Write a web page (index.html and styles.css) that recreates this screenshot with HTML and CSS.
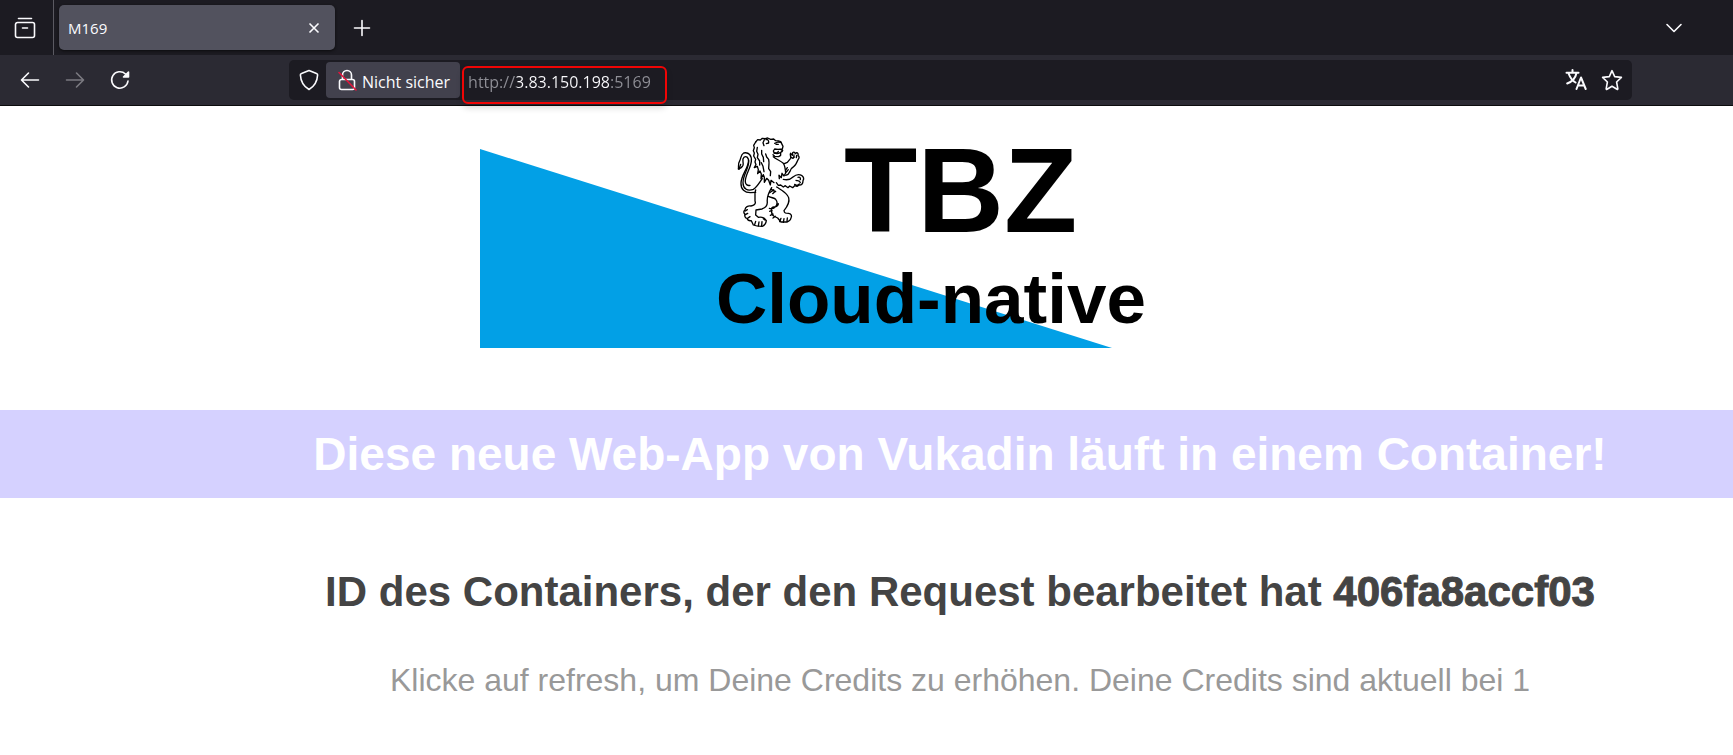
FILE: index.html
```html
<!DOCTYPE html>
<html lang="de">
<head>
<meta charset="utf-8">
<meta name="viewport" content="width=device-width, initial-scale=1">
<title>M169</title>
<link rel="stylesheet" href="styles.css">
</head>
<body>
<header class="browser">
  <div class="tab-bar">
    <button class="icon-button tab-overview" type="button" aria-label="Ansicht">
      <svg class="icon" viewBox="0 0 22 22"><path d="M4.500 1.500h13M3.500 5.500h15a2 2 0 0 1 2 2v11a2 2 0 0 1-2 2h-15a2 2 0 0 1-2-2v-11a2 2 0 0 1 2-2zM8.500 11h5"/></svg>
    </button>
    <div class="tab">
      <span class="tab-title">M169</span>
      <button class="tab-close" type="button" aria-label="Tab schließen">
        <svg class="icon-small" viewBox="0 0 12 12"><path d="M1.500 1.500l9 9M10.500 1.500l-9 9"/></svg>
      </button>
    </div>
    <button class="icon-button new-tab" type="button" aria-label="Neuer Tab">
      <svg class="icon" viewBox="0 0 22 22"><path d="M11 3.500v15M3.500 11h15"/></svg>
    </button>
    <button class="icon-button all-tabs" type="button" aria-label="Alle Tabs">
      <svg class="icon" viewBox="0 0 22 22"><path d="M4 7.500l7 7 7-7"/></svg>
    </button>
  </div>
  <div class="toolbar">
    <nav class="navigation" aria-label="Navigation">
      <button class="icon-button" type="button" aria-label="Zurück">
        <svg class="icon" viewBox="0 0 22 22"><path d="M19.500 11H3M9.500 4L2.500 11l7 7"/></svg>
      </button>
      <button class="icon-button" type="button" aria-label="Vor" disabled>
        <svg class="icon" viewBox="0 0 22 22"><path d="M2.500 11H19M12.500 4l7 7-7 7"/></svg>
      </button>
      <button class="icon-button" type="button" aria-label="Neu laden">
        <svg class="icon" viewBox="0 0 22 22"><path d="M19 12A8.200 8.200 0 1 1 16.500 5"/><path class="solid" d="M19.500 3v5H14.500z"/></svg>
      </button>
    </nav>
    <div class="address">
      <button class="shield" type="button" aria-label="Schutz">
        <svg class="icon" viewBox="0 0 22 22"><path d="M11 1.500l7.500 2.900c.9.300 1.200.8 1.100 1.600-.3 5.800-2.600 11-8.600 14.500C5 17 2.700 11.800 2.400 6c-.1-.8.200-1.300 1.100-1.600z"/></svg>
      </button>
      <button class="identity" type="button">
        <svg class="icon" viewBox="0 0 22 22"><path d="M6.500 10.500V6a4.500 4.500 0 0 1 9 0v4.500M5.500 10.500h11a2 2 0 0 1 2 2v6a2 2 0 0 1-2 2h-11a2 2 0 0 1-2-2v-6a2 2 0 0 1 2-2z"/><path class="slash" d="M3 3.500l17 17.500"/></svg>
        <span class="identity-label">Nicht sicher</span>
      </button>
      <div class="location">
        <input class="url" type="text" value="http://3.83.150.198:5169" aria-label="Adresse" spellcheck="false">
        <span class="marker"></span>
      </div>
      <button class="icon-button" type="button" aria-label="Übersetzen">
        <svg class="icon bold" viewBox="0 0 22 22"><path d="M1.500 3.800h12M7.500 1v2.800M11.500 4c-1 5-4 8.500-9.300 10.500M3.800 5c1.500 4 4 7 6.700 8.500M11.500 20l4.500-11.500L20.700 20M13 16.500h6.400"/></svg>
      </button>
      <button class="icon-button" type="button" aria-label="Lesezeichen">
        <svg class="icon" viewBox="0 0 22 22"><path d="M11 1.700l2.700 5.900 6.700.8-4.800 4.600 1.200 6.600c.1.700-.2.900-.8.600L11 17.200l-5 3c-.6.300-.9.100-.8-.6L6.400 13 1.600 8.400l6.700-.8z"/></svg>
      </button>
    </div>
  </div>
</header>
<main class="page">
  <div class="hero">
    <svg class="logo" viewBox="0 0 960 304" role="img" aria-label="TBZ Cloud-native">
      <path fill="#02a0e6" d="M0 43L632 242H0z"/>
      <g class="lion" transform="translate(240 24) scale(.3333)">
        <path d="M107 36l6-7 8 1 6-5 9 1 7-2 9 4 9-1 6 5 10 1 5 2 3 6 4 8-2 8-13 1-10-1-4 6 3 6 8 2 7-2 8-4 2-4-5-2M187 62l-5 6 0 8-6 4-12-1-5-5"/>
        <path d="M133 29l-4 9 3 9M138 29c5-2 9 3 8 10l-7 2M164 40l10-4 9 1M168 43h7M175 64l-3 5-10 0"/>
        <path d="M107 36l-6 10 2 7-3 9 3 7-2 9 6 10-2 8 3 8-5 9 9-4 3 10-2 12 7-8 4 9-1 14 7-12 3 8 0 15 7-12 6 6 5 14 2-14 9 7"/>
        <path d="M112 52l-2 12 4 9-2 10 7 10 0 12M125 61l0 11 5 10 1 13M137 72l3 9 6 7 1 9M147 100l-1 16 6 9-1 12M124 98l5 11 3 16M160 80c8 8 22 12 30 20 5 6 6 17 7 29l-5 9-6-8-2 13-7-7 1 10"/>
        <path d="M193 101l9-4 10-12c2-6-4-11 0-15l5 6 1-8c4-4 7 0 8 3l3-3c6 0 6 5 5 9 5 3 4 8 0 12-3 7-6 17-13 21-5 3-10 6-11 14l-6 9-7 3"/>
        <path d="M214 82l5 3 4-4M221 83l1-8M229 83l1-7M202 113l-5 7M205 119l-6 7"/>
        <path d="M190 148c12 3 21 1 29-7 8-7 19-9 27-4 5 4 6 10 3 15 0 9-4 13-11 13l-7 4-7-2-6 6-9-5-5 5-8-6-6 4-8-6-7 1-6-8"/>
        <path d="M234 142c6-2 8 2 7 7M228 151c6 2 11 0 13 7M224 163l7 4 7-5"/>
        <path d="M127 146c-8 10-15 25-27 32-19 7-31-3-31-20 0-23 17-43 17-63 0-14-8-18-14-13-8 7 0 16-3 24-3 7-8 10-14 11 2-7-2-14 3-22 6-11 4-22 13-26 15-4 25 8 23 25-2 21-20 43-18 62 1 8 7 12 14 10"/>
        <path d="M62 103l-5 15M86 90c0 24-23 45-23 70-1 17 11 29 30 28l14-1"/>
        <path d="M107 180l-2 9 0 24c4 9-4 14-12 15-9-1-17 2-18 11-4 4-4 10 0 14-2 6 1 11 6 12 2 6 8 8 13 7l6 13c9 4 18 4 26 4 7-2 12-9 13-17-5-8-14-12-24-10l-8-7 1-15 18-3c12-4 16-10 16-20-2-15 5-31 13-44"/>
        <path d="M76 243l6-4M76 254l7-4M83 265l7-5M104 284l3-10M115 288l2-12M125 287l1-12M130 266l5 4"/>
        <path d="M145 199c6 5 15 2 22 9 6 7 5 15 0 22-5 6-13 7-19 5M170 171c14 9 31 17 36 32 4 14-5 28-14 39 1 8 5 8 14 8 9 2 10 8 7 14-1 6-5 10-12 12h-18l-10-12-12-6c-5-4-7-9-6-15-4-8 3-14 10-12 8-3 10-5 10-10M154 178l13 7M149 188l12-9M158 191l8-7"/>
        <path d="M149 244l7-3M151 256l8-4M159 264l7-5M179 275l4-10M190 277l2-11M201 274l1-10"/>
      </g>
      <text class="logo-name" x="364" y="126">TBZ</text>
      <text class="logo-sub" x="236" y="217">Cloud-native</text>
    </svg>
  </div>
  <h1 class="banner">Diese neue Web-App von Vukadin läuft in einem Container!</h1>
  <h2 class="request">ID des Containers, der den Request bearbeitet hat <strong>406fa8accf03</strong></h2>
  <p class="credits">Klicke auf refresh, um Deine Credits zu erhöhen. Deine Credits sind aktuell bei 1</p>
</main>
</body>
</html>
```

FILE: styles.css
```css
* { box-sizing: border-box; }

body {
  margin: 0;
  background: #fff;
  font-family: "Liberation Sans", Arial, sans-serif;
}

button {
  margin: 0;
  padding: 0;
  border: 0;
  background: none;
  color: inherit;
  font: inherit;
}

/* Browser chrome */
.browser {
  color: #fbfbfe;
  background: #2b2a33;
  font-family: "Open Sans", "Noto Sans", sans-serif;
  border-bottom: 1px solid #0c0c0d;
}

.tab-bar {
  display: flex;
  align-items: center;
  height: 55px;
  padding-right: 37px;
  background: #1c1b22;
}

.icon-button {
  display: flex;
  align-items: center;
  justify-content: center;
  width: 45px;
  height: 40px;
}

.icon-button:disabled { color: #7b7a81; }

.icon {
  width: 22px;
  height: 22px;
  fill: none;
  stroke: currentColor;
  stroke-width: 1.6;
  stroke-linecap: round;
  stroke-linejoin: round;
}

.icon-small {
  display: block;
  width: 12px;
  height: 12px;
  fill: none;
  stroke: currentColor;
  stroke-width: 1.6;
}

.bold { stroke-width: 2; }
.solid { fill: currentColor; }
.slash { stroke: #e2153d; }

.tab-overview {
  width: 54px;
  height: 55px;
  padding-right: 4px;
  border-right: 1px solid #5b5a62;
}

.tab {
  display: flex;
  align-items: center;
  justify-content: space-between;
  width: 276px;
  height: 45px;
  margin-left: 5px;
  padding: 0 15px 0 9px;
  border-radius: 5px;
  background: #52525e;
  box-shadow: 0 1px 3px #0c0c0d;
}

.tab-title { font-size: 15px; }
.new-tab { margin-left: 4px; }
.all-tabs { margin-left: auto; }

.toolbar {
  display: flex;
  align-items: center;
  height: 50px;
  padding: 0 101px 0 7px;
}

.navigation {
  display: flex;
  width: 282px;
}

.address {
  display: flex;
  flex: 1;
  align-items: center;
  height: 40px;
  padding-right: 2px;
  border-radius: 5px;
  background: #1c1b22;
}

.address .icon-button { width: 36px; }

.shield {
  display: flex;
  justify-content: center;
  width: 37px;
  padding-left: 3px;
}

.identity {
  display: flex;
  align-items: center;
  gap: 4px;
  height: 36px;
  padding: 0 10px;
  border-radius: 4px;
  background: #42414d;
  font-size: 16px;
  white-space: nowrap;
}

.identity-label { padding-top: 4px; }

.location {
  position: relative;
  flex: 1;
  padding: 4px 0 0 8px;
}

.url {
  display: block;
  width: 100%;
  padding: 0;
  border: 0;
  outline: 0;
  color: #fbfbfe;
  background: linear-gradient(90deg, #8f8f96 49px, #fbfbfe 49px, #fbfbfe 142px, #8f8f96 142px);
  background-clip: text;
  -webkit-background-clip: text;
  -webkit-text-fill-color: transparent;
  font: 16px/24px "Open Sans", "Noto Sans", sans-serif;
}

.marker {
  position: absolute;
  top: 0;
  left: 2px;
  width: 205px;
  height: 38px;
  border: 2px solid #f00505;
  border-radius: 6px;
  box-shadow: 0 4px 6px rgba(0, 0, 0, .15);
  pointer-events: none;
}

/* Page content, centred in a column that starts right of the window edge */
.page { text-align: center; }

.hero,
.banner,
.request,
.credits { padding-left: 187px; }

.logo {
  display: block;
  width: 100%;
  max-width: 960px;
  margin: 0 auto;
}

.logo text { font-weight: 700; }
.logo-name { font-size: 120px; }
.logo-sub { font-size: 71px; }

.lion {
  fill: none;
  stroke: #000;
  stroke-width: 4;
  stroke-linecap: round;
  stroke-linejoin: round;
}

.banner {
  margin: 0;
  padding-top: 18px;
  padding-bottom: 18px;
  color: #fff;
  background: #d5d1ff;
  font-size: 46px;
  line-height: 52px;
}

.request {
  margin: 66px 0 0;
  color: #444;
  font-size: 42px;
  line-height: 56px;
}

.request strong { -webkit-text-stroke: 1px #444; }

.credits {
  margin: 40px 0 0;
  color: #999;
  font-size: 32px;
  line-height: 40px;
}
```
